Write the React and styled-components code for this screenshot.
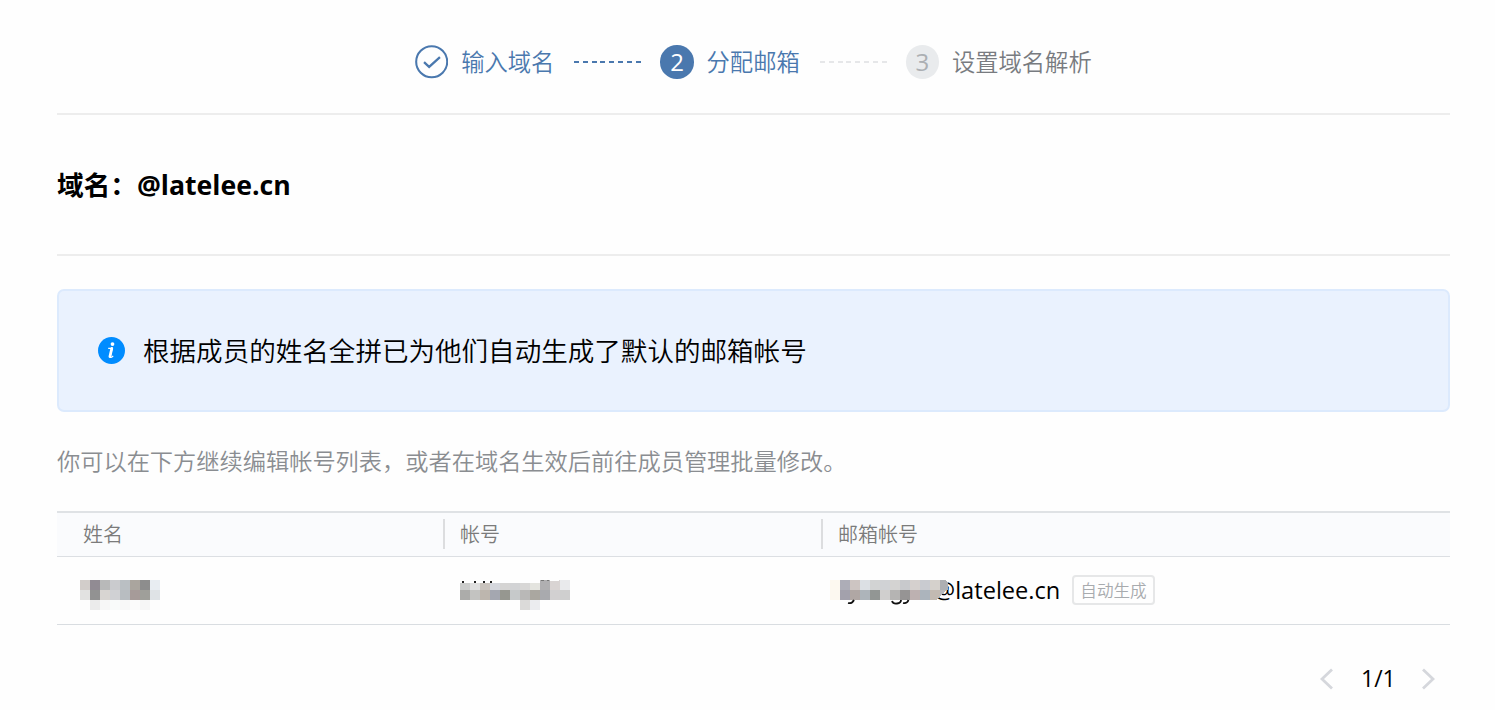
import React from "react";
import styled, { createGlobalStyle } from "styled-components";

const GlobalStyle = createGlobalStyle`
  * {
    box-sizing: border-box;
  }

  body {
    margin: 0;
    background: #fefefe;
    color: #000;
    font-family: "Open Sans", "Noto Sans CJK SC", sans-serif;
    font-weight: 400;
  }
`;

const Page = styled.main`
  width: 1495px;
  height: 710px;
  padding: 0 45px 0 57px;
  overflow: hidden;
`;

const Steps = styled.header`
  display: flex;
  align-items: center;
  height: 115px;
  padding: 11px 0 0 358px;
  border-bottom: 2px solid #ededed;
`;

const stepColors = {
  done: "#4a78ae",
  active: "#4a78ae",
  waiting: "#787b80",
};

const Step = styled.div`
  display: flex;
  align-items: center;
  color: ${props => stepColors[props.$state]};
`;

const StepNumber = styled.span`
  display: flex;
  align-items: center;
  justify-content: center;
  width: 33.4px;
  height: 33.4px;
  border-radius: 50%;
  font-size: 24px;
  line-height: 33px;
  background: ${props => (props.$active ? "#4a78ae" : "#e9ebed")};
  color: ${props => (props.$active ? "#fff" : "#acafb3")};
`;

const StepIcon = styled.svg`
  display: block;
  width: 33.4px;
  height: 33.4px;
`;

const StepLabel = styled.span`
  margin-left: 12.8px;
  font-size: 23.3px;
  font-weight: 350;
  line-height: 34px;
  white-space: nowrap;
`;

const StepLine = styled.span`
  width: 67px;
  height: 2px;
  margin: 0 19px 0 20px;
  background: repeating-linear-gradient(
    to right,
    ${props => props.$color} 0,
    ${props => props.$color} 5px,
    transparent 5px,
    transparent 8.8px
  );
`;

const Domain = styled.h1`
  height: 141px;
  margin: 0;
  padding-top: 50px;
  border-bottom: 2px solid #ededed;
  font-size: 26.65px;
  font-weight: 700;
  line-height: 40px;
`;

const Notice = styled.section`
  display: flex;
  align-items: center;
  height: 123px;
  margin-top: 33px;
  padding-left: 39px;
  border: 2px solid #dceafd;
  border-radius: 7px;
  background: #eaf2fe;
  font-size: 26.55px;
  font-weight: 350;
  line-height: 40px;
`;

const InfoIcon = styled.svg`
  width: 27px;
  height: 27px;
  margin-right: 18px;
`;

const Hint = styled.p`
  height: 34px;
  margin: 32px 0 33px;
  color: #8a8d91;
  font-size: 23.23px;
  font-weight: 350;
  line-height: 34px;
`;

const Row = styled.div`
  display: grid;
  grid-template-columns: 386px 378px 1fr;
  align-items: center;
`;

const HeadRow = styled(Row)`
  height: 46px;
  border-top: 2px solid #dfe2e5;
  border-bottom: 1px solid #dcdfe3;
  background: #fafbfd;
`;

const HeadCell = styled.div`
  height: 30px;
  margin-top: -1px;
  padding-left: ${props => (props.$first ? 26 : 15)}px;
  border-left: ${props => (props.$first ? "none" : "2px solid #dcdddf")};
  color: #7b7b7b;
  font-size: 20px;
  font-weight: 350;
  line-height: 32px;
`;

const BodyRow = styled(Row)`
  height: 68px;
  border-bottom: 1px solid #d9dde1;
`;

const Cell = styled.div`
  display: flex;
  align-items: center;
  height: 67px;
  padding: 0 0 1px ${props => props.$indent}px;
`;

const Mosaic = styled.svg`
  display: block;
  flex: none;
  z-index: 1;
`;

const Address = styled.span`
  margin-left: -16px;
  font-size: 23.6px;
  line-height: 34px;
`;

const Tag = styled.span`
  height: 30px;
  margin-left: 12px;
  padding: 0 6px;
  border: 2px solid #e6e7e8;
  border-radius: 4px;
  color: #a8abae;
  font-size: 16.6px;
  font-weight: 350;
  line-height: 28px;
`;

const Pager = styled.nav`
  display: flex;
  align-items: center;
  justify-content: flex-end;
  height: 34px;
  margin-top: 36px;
  padding-right: 15px;
  font-size: 23px;
`;

const PageCount = styled.span`
  width: 32px;
  margin: 0 29px 0 28px;
  line-height: 32px;
  text-align: center;
  white-space: nowrap;
`;

const Arrow = styled.svg`
  width: 13px;
  height: 22px;
  margin-top: 2px;
`;

const nameTiles = [
  ["#fefefe", "#fcfcfc", "#fdfdfd"],
  ["#d2cdca", "#918b93", "#b8b9b9", "#cacbce", "#babfc3", "#aaa59e", "#8d8d8d", "#e8edf2"],
  ["#e2e2e1", "#929292", "#d8d5d2", "#d0d1d4", "#b8bdc1", "#a69b99", "#9f9f9a", "#dfe3e6"],
  ["#fdfdfd", "#ebebeb", "#f7f7f7", "#f9fbfa", "#f8f8f8", "#fbfbfb", "#f6f6f6", "#fdfdfd"],
];

const accountTiles = [
  [],
  ["#cbcccb", "#dfdfdf", "#c9c3bd", "#d5d7dd", "#d5d4d3", "#d2d3d5", "#d8d7d6", "#e4e4df", "#b0afb1", "#d9d4d3", "#e9eaec"],
  ["#acacaa", "#c3c3c1", "#bdb6ae", "#a4a7b0", "#969790", "#c6c9ca", "#b9b8b7", "#aaa7a0", "#a9aaae", "#d2d0d1", "#cfcfcf"],
  [null, null, null, null, null, null, "#dbdad9", "#ebecef"],
];

const mailTiles = [
  [],
  ["#fdf9f0", "#adadb7", "#cdc5c2", "#dce0e4", "#d2d3d3", "#d0d2d5", "#d4d3d2", "#c8c9cc", "#d5d0ce", "#c9cbd0", "#d5d1cc"],
  ["#fcf8f0", "#a3a1ac", "#b0a7a4", "#adb4ba", "#929694", "#d0cfce", "#b5b4b3", "#969494", "#bdb1b1", "#acb4bc"],
];

const Tiles = ({ rows, width, children }) => (
  <Mosaic width={width} height="40" viewBox={`0 0 ${width} 40`} shapeRendering="crispEdges">
    {rows.map((row, y) =>
      row.map(
        (color, x) =>
          color && <rect key={`${x}-${y}`} x={x * 10} y={y * 10} width="10" height="10" fill={color} />
      )
    )}
    {children}
  </Mosaic>
);

const App = () => (
  <>
    <GlobalStyle />
    <Page>
      <Steps>
        <Step $state="done">
          <StepIcon viewBox="0 0 34 34" fill="none" stroke="currentColor" strokeWidth="2.1">
            <circle cx="17" cy="17" r="15.8" />
            <path d="M9.2 17.5l5.2 4.800 11-10" strokeWidth="2.3" />
          </StepIcon>
          <StepLabel>输入域名</StepLabel>
        </Step>
        <StepLine $color="#4a78ae" />
        <Step $state="active">
          <StepNumber $active>2</StepNumber>
          <StepLabel>分配邮箱</StepLabel>
        </Step>
        <StepLine $color="#e6e7e9" />
        <Step $state="waiting">
          <StepNumber>3</StepNumber>
          <StepLabel>设置域名解析</StepLabel>
        </Step>
      </Steps>

      <Domain>域名：@latelee.cn</Domain>

      <Notice>
        <InfoIcon viewBox="0 0 27 27">
          <circle cx="13.5" cy="13.5" r="13.5" fill="#008cff" />
          <circle cx="14.5" cy="7.1" r="1.9" fill="#fff" />
          <path
            d="M10.200 11.300h4l-1.900 8.400c-.2 1.200 1.200 1 2.900-.8"
            fill="none"
            stroke="#fff"
            strokeWidth="1.200"
          />
          <path d="M13.800 11.400l-1.900 8.200" stroke="#fff" strokeWidth="2.700" strokeLinecap="round" />
        </InfoIcon>
        根据成员的姓名全拼已为他们自动生成了默认的邮箱帐号
      </Notice>

      <Hint>你可以在下方继续编辑帐号列表，或者在域名生效后前往成员管理批量修改。</Hint>

      <HeadRow>
        <HeadCell $first>姓名</HeadCell>
        <HeadCell>帐号</HeadCell>
        <HeadCell>邮箱帐号</HeadCell>
      </HeadRow>
      <BodyRow>
        <Cell $indent={23}>
          <Tiles rows={nameTiles} width={80} />
        </Cell>
        <Cell $indent={17}>
          <Tiles rows={accountTiles} width={110}>
            <path d="M0 10h80v3H0zM90 10h9v1h-9z" fill="#fefefe" />
            <path d="M2 11h2v2h-2zM14 11h2v2h-2zM23 11h2v2h-2zM30 11h2v2h-2z" fill="#222" />
            <path d="M81 10h3v1h-3zM87 10h2v1h-2z" fill="#777" />
          </Tiles>
        </Cell>
        <Cell $indent={9}>
          <Tiles rows={mailTiles} width={120}>
            {/* the blur stops on a slant where the @ begins */}
            <path d="M110 10h6l2 3v7h-8z" fill="#adafb2" />
            <path d="M100 20h10v7l-4 3h-6z" fill="#c2bab2" />
            <path d="M110 20h6l-3 4-3 2z" fill="#b7b8bc" />
            <path
              d="M18 33q4 1 6-3M62 31q1 3 5 2.500 4-.5 4-3.500M73 33q4 1 5.500-3"
              fill="none"
              stroke="#111"
              strokeWidth="1.800"
              shapeRendering="auto"
            />
          </Tiles>
          <Address>@latelee.cn</Address>
          <Tag>自动生成</Tag>
        </Cell>
      </BodyRow>

      <Pager>
        <Arrow viewBox="0 0 13 22" fill="none" stroke="#d5d7dc" strokeWidth="2.800">
          <path d="M12 1.500L2 11l10 9.500" />
        </Arrow>
        <PageCount>1/1</PageCount>
        <Arrow viewBox="0 0 13 22" fill="none" stroke="#d5d7dc" strokeWidth="2.800">
          <path d="M1 1.500L11 11 1 20.500" />
        </Arrow>
      </Pager>
    </Page>
  </>
);

export default App;
